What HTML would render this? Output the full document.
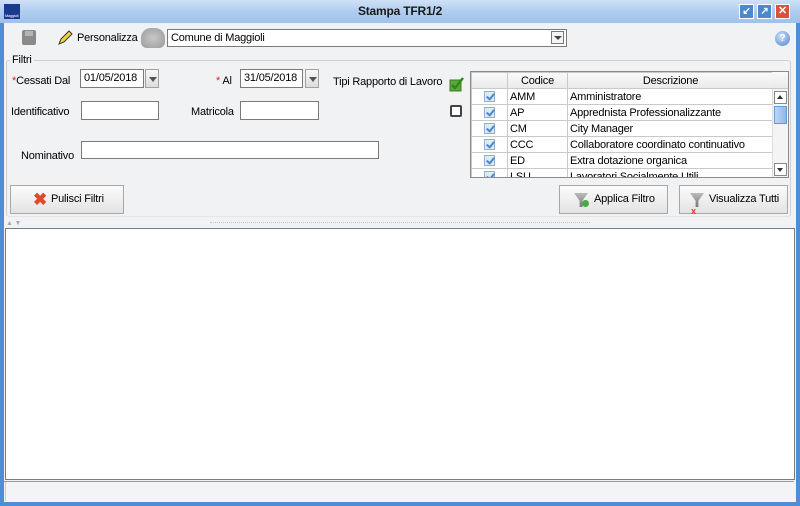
<!DOCTYPE html>
<html><head><meta charset="utf-8"><style>
*{box-sizing:border-box;margin:0;padding:0}
body{width:800px;height:506px;overflow:hidden;font-family:"Liberation Sans",sans-serif;font-size:11px;letter-spacing:-0.2px;color:#000;background:#4f8ed4;position:relative}
.a{position:absolute}
.title{left:0;top:0;width:800px;height:23px;background:linear-gradient(#cfe1f7,#b0cdef 50%,#9fc1ea);}
.win{left:4px;top:23px;width:792px;height:479px;background:#f1f2f4}
.inp{position:absolute;background:#fff;border:1px solid #7a7a7a;height:19px;padding:1px 3px;font-size:11px;line-height:15px}
.dd{position:absolute;width:14px;height:19px;border:1px solid #a0a0a0;background:linear-gradient(#f8f8f8,#dcdcdc)}
.dd:after{content:"";position:absolute;left:3px;top:7px;border-left:4px solid transparent;border-right:4px solid transparent;border-top:5px solid #555}
.btn{position:absolute;height:29px;border:1px solid #a8a8a8;background:linear-gradient(#fbfbfb,#e3e3e3);font-size:11px;line-height:27px}
.red{color:#d22}
table{border-collapse:collapse;font-size:11px}
td{border:1px solid #c9c9c9;height:16px;padding:0 2px;white-space:nowrap;overflow:hidden}
.cb{display:inline-block;width:11px;height:11px;border:1px solid #8fb1d8;background:#dbe8f6;position:relative;top:1px}
.cb:after{content:"";position:absolute;left:3px;top:0;width:3px;height:6px;border:solid #4d86c8;border-width:0 2px 2px 0;transform:rotate(40deg)}
</style></head><body>
<div class="a title"></div>
<div class="a" style="left:4px;top:4px;width:16px;height:15px;background:#1b3a8c"><div style="position:absolute;left:1px;top:9px;font-size:4px;color:#fff">Maggioli</div></div>
<div class="a" style="left:0;top:4px;width:800px;text-align:center;font-weight:bold;font-size:12px;color:#1a1a1a">Stampa TFR1/2</div>
<div class="a" style="left:739px;top:4px;width:15px;height:15px;background:#4f87cc;border:1px solid #fff;color:#fff;font-size:10px;text-align:center;line-height:13px;font-weight:bold">↙</div>
<div class="a" style="left:757px;top:4px;width:15px;height:15px;background:#4f87cc;border:1px solid #fff;color:#fff;font-size:10px;text-align:center;line-height:13px;font-weight:bold">↗</div>
<div class="a" style="left:775px;top:4px;width:15px;height:15px;background:#d9523c;border:1px solid #fff;color:#fff;font-size:11px;text-align:center;line-height:13px;font-weight:bold">✕</div>
<div class="a win"></div>
<div class="a" style="left:22px;top:30px;width:14px;height:15px;background:#8a8a8a;border-radius:2px"><div style="position:absolute;left:3px;top:1px;width:8px;height:5px;background:#b5b5b5"></div></div>
<svg class="a" style="left:56px;top:29px" width="18" height="18"><path d="M3 15 L5 10 L13 2 L16 5 L8 13 Z" fill="#f4d23a" stroke="#333" stroke-width="1"/></svg>
<div class="a" style="left:77px;top:32px">Personalizza</div>
<div class="a" style="left:141px;top:28px;width:24px;height:20px;background:radial-gradient(#c8c8c8,#9a9a9a);border-radius:10px 10px 6px 6px"></div>
<div class="inp" style="left:167px;top:29px;width:400px;height:18px;line-height:14px">Comune di Maggioli</div>
<div class="a" style="left:551px;top:31px;width:13px;height:13px;border:1px solid #777;background:#f4f4f4"></div>
<div class="a" style="left:554px;top:36px;border-left:4px solid transparent;border-right:4px solid transparent;border-top:4px solid #444"></div>
<div class="a" style="left:775px;top:31px;width:15px;height:15px;border-radius:50%;background:radial-gradient(circle at 40% 35%,#cfe2fb,#4a7fcf);color:#fff;font-size:10px;text-align:center;line-height:15px;font-weight:bold">?</div>
<div class="a" style="left:6px;top:60px;width:785px;height:157px;border:1px solid #d0d0d0;border-bottom-color:#e4e4e4;border-radius:3px"></div>
<div class="a" style="left:10px;top:54px;background:#f1f2f4;padding:0 2px">Filtri</div>
<div class="a" style="left:12px;top:75px"><span class="red">*</span>Cessati Dal</div>
<div class="inp" style="left:80px;top:69px;width:64px">01/05/2018</div>
<div class="dd" style="left:145px;top:69px"></div>
<div class="a" style="left:216px;top:75px"><span class="red">*</span> Al</div>
<div class="inp" style="left:240px;top:69px;width:63px">31/05/2018</div>
<div class="dd" style="left:305px;top:69px"></div>
<div class="a" style="left:333px;top:76px">Tipi Rapporto di Lavoro</div>
<svg class="a" style="left:448px;top:76px" width="17" height="16"><rect x="2" y="4" width="11" height="11" fill="#5aa83a" stroke="#3b7a22"/><path d="M4 9 L7 12 L15 2" stroke="#2e8a1a" stroke-width="2.5" fill="none"/></svg>
<div class="a" style="left:11px;top:106px">Identificativo</div>
<div class="inp" style="left:81px;top:101px;width:78px"></div>
<div class="a" style="left:191px;top:106px">Matricola</div>
<div class="inp" style="left:240px;top:101px;width:79px"></div>
<div class="a" style="left:450px;top:105px;width:12px;height:12px;border:2px solid #444;border-radius:2px;background:#fff"></div>
<div class="a" style="left:21px;top:150px">Nominativo</div>
<div class="inp" style="left:81px;top:141px;width:298px;height:18px"></div>
<div class="a" style="left:470px;top:71px;width:319px;height:107px;border:1px solid #8a8a8a;background:#fff;overflow:hidden">
<table style="width:302px;table-layout:fixed">
<colgroup><col style="width:36px"><col style="width:60px"><col style="width:206px"></colgroup>
<tr style="background:linear-gradient(#fafafa,#e9e9e9)"><td></td><td style="text-align:center">Codice</td><td style="text-align:center">Descrizione</td></tr>
<tr><td style="text-align:center"><span class="cb"></span></td><td>AMM</td><td>Amministratore</td></tr>
<tr><td style="text-align:center"><span class="cb"></span></td><td>AP</td><td>Apprednista Professionalizzante</td></tr>
<tr><td style="text-align:center"><span class="cb"></span></td><td>CM</td><td>City Manager</td></tr>
<tr><td style="text-align:center"><span class="cb"></span></td><td>CCC</td><td>Collaboratore coordinato continuativo</td></tr>
<tr><td style="text-align:center"><span class="cb"></span></td><td>ED</td><td>Extra dotazione organica</td></tr>
<tr><td style="text-align:center"><span class="cb"></span></td><td>LSU</td><td>Lavoratori Socialmente Utili</td></tr>
</table>
<div class="a" style="left:301px;top:0;width:17px;height:17px;background:linear-gradient(#fafafa,#e9e9e9);border-bottom:1px solid #c9c9c9"></div>
<div class="a" style="left:301px;top:17px;width:17px;height:90px;background:#f4f4f4;border-left:1px solid #ddd"></div>
<div class="a" style="left:303px;top:19px;width:13px;height:13px;border:1px solid #888;background:#fff"></div>
<div class="a" style="left:306px;top:23px;border-left:3px solid transparent;border-right:3px solid transparent;border-bottom:4px solid #333"></div>
<div class="a" style="left:303px;top:34px;width:13px;height:18px;border:1px solid #6a9ad6;background:linear-gradient(90deg,#bcd5f4,#8fb7ea)"></div>
<div class="a" style="left:303px;top:91px;width:13px;height:13px;border:1px solid #888;background:#fff"></div>
<div class="a" style="left:306px;top:96px;border-left:3px solid transparent;border-right:3px solid transparent;border-top:4px solid #333"></div>
</div>
<div class="btn" style="left:10px;top:185px;width:114px;padding-left:40px"><span style="position:absolute;left:22px;top:0;color:#e04a2a;font-size:17px;font-weight:bold">✖</span>Pulisci Filtri</div>
<div class="btn" style="left:559px;top:185px;width:109px;padding-left:34px"><span style="position:absolute;left:14px;top:7px;width:14px;height:14px;background:linear-gradient(#bbb,#777);clip-path:polygon(0 0,100% 0,60% 55%,60% 100%,40% 100%,40% 55%)"></span><span style="position:absolute;left:22px;top:14px;width:7px;height:7px;background:#4a4;border-radius:50%"></span>Applica Filtro</div>
<div class="btn" style="left:679px;top:185px;width:109px;padding-left:29px"><span style="position:absolute;left:10px;top:7px;width:14px;height:14px;background:linear-gradient(#bbb,#777);clip-path:polygon(0 0,100% 0,60% 55%,60% 100%,40% 100%,40% 55%)"></span><span style="position:absolute;left:11px;top:12px;color:#d33;font-size:9px;font-weight:bold">x</span>Visualizza Tutti</div>
<div class="a" style="left:6px;top:220px;font-size:7px;color:#aab">▲ ▼</div>
<div class="a" style="left:210px;top:222px;width:380px;border-top:1px dotted #c4c4c4"></div>
<div class="a" style="left:5px;top:228px;width:790px;height:252px;background:#fff;border:1px solid #7d7d7d"></div>
<div class="a" style="left:4px;top:481px;width:790px;height:1px;background:#999"></div>
<div class="a" style="left:5px;top:482px;width:789px;height:19px;background:#f3f4f6;border-left:1px solid #ccc"></div>
</body></html>
